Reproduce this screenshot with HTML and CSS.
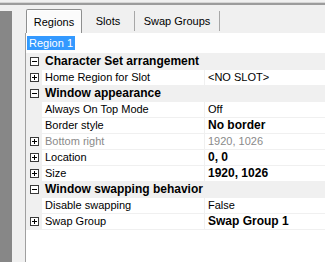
FILE: index.html
```html
<!DOCTYPE html>
<html>
<head>
<meta charset="utf-8">
<link rel="stylesheet" href="styles.css">
</head>
<body>
<div class="topline"></div>
<div class="main">
  <div class="strip"></div>
  <div class="panel">
    <div class="tabs">
      <div class="tab active">Regions</div>
      <div class="tab t-slots">Slots</div>
      <div class="tab t-swap">Swap Groups</div>
    </div>
    <div class="body">
      <div class="namebox"><span class="sel">Region 1</span></div>
      <div class="grid">
        <div class="row cat"><span class="exp"><svg width="9" height="9"><rect x="0.5" y="0.5" width="8" height="8" fill="#fff" stroke="#3a3a3a"/><path d="M2 4.5h5" stroke="#000"/></svg></span><span class="label">Character Set arrangement</span></div>
        <div class="row"><span class="exp"><svg width="9" height="9"><rect x="0.5" y="0.5" width="8" height="8" fill="#fff" stroke="#3a3a3a"/><path d="M2 4.5h5M4.5 2v5" stroke="#000"/></svg></span><span class="label">Home Region for Slot</span><span class="value">&lt;NO SLOT&gt;</span></div>
        <div class="row cat"><span class="exp"><svg width="9" height="9"><rect x="0.5" y="0.5" width="8" height="8" fill="#fff" stroke="#3a3a3a"/><path d="M2 4.5h5" stroke="#000"/></svg></span><span class="label">Window appearance</span></div>
        <div class="row"><span class="exp"></span><span class="label">Always On Top Mode</span><span class="value">Off</span></div>
        <div class="row"><span class="exp"></span><span class="label">Border style</span><span class="value b">No border</span></div>
        <div class="row dim"><span class="exp"><svg width="9" height="9"><rect x="0.5" y="0.5" width="8" height="8" fill="#fff" stroke="#3a3a3a"/><path d="M2 4.5h5M4.5 2v5" stroke="#000"/></svg></span><span class="label">Bottom right</span><span class="value">1920, 1026</span></div>
        <div class="row"><span class="exp"><svg width="9" height="9"><rect x="0.5" y="0.5" width="8" height="8" fill="#fff" stroke="#3a3a3a"/><path d="M2 4.5h5M4.5 2v5" stroke="#000"/></svg></span><span class="label">Location</span><span class="value b">0, 0</span></div>
        <div class="row"><span class="exp"><svg width="9" height="9"><rect x="0.5" y="0.5" width="8" height="8" fill="#fff" stroke="#3a3a3a"/><path d="M2 4.5h5M4.5 2v5" stroke="#000"/></svg></span><span class="label">Size</span><span class="value b">1920, 1026</span></div>
        <div class="row cat"><span class="exp"><svg width="9" height="9"><rect x="0.5" y="0.5" width="8" height="8" fill="#fff" stroke="#3a3a3a"/><path d="M2 4.5h5" stroke="#000"/></svg></span><span class="label">Window swapping behavior</span></div>
        <div class="row"><span class="exp"></span><span class="label">Disable swapping</span><span class="value">False</span></div>
        <div class="row"><span class="exp"><svg width="9" height="9"><rect x="0.5" y="0.5" width="8" height="8" fill="#fff" stroke="#3a3a3a"/><path d="M2 4.5h5M4.5 2v5" stroke="#000"/></svg></span><span class="label">Swap Group</span><span class="value b">Swap Group 1</span></div>
      </div>
    </div>
  </div>
</div>
</body>
</html>
```

FILE: styles.css
```css
html, body {
  margin: 0;
  height: 100%;
}
body {
  background: #f0f0f0;
  font-family: "Liberation Sans", Arial, sans-serif;
  font-size: 11px;
  color: #000;
  overflow: hidden;
}
.topline {
  margin-top: 2px;
  height: 1px;
  background: #d6d6d6;
  border-bottom: 2px solid #9c9c9c;
}
.main {
  display: flex;
  height: calc(100% - 5px);
}
.strip {
  width: 12px;
  background: #878787;
  margin-top: 6px;
}
.panel {
  flex: 1;
  display: flex;
  flex-direction: column;
  margin-left: 13px;
}
.tabs {
  display: flex;
  height: 24px;
  margin-top: 4px;
  padding-left: 1px;
}
.tab {
  box-sizing: border-box;
  display: flex;
  align-items: center;
  justify-content: center;
}
.tab.active {
  width: 56px;
  height: 24px;
  border: 1px solid #8e8f8f;
  border-bottom: none;
  border-radius: 2px 2px 0 0;
  background: #fbfbfb;
  box-shadow: inset 1px 1px #fff;
}
.t-slots, .t-swap {
  height: 20px;
  margin-top: 2px;
  border-right: 1px solid #a7a7a7;
}
.t-slots {
  width: 53px;
}
.t-swap {
  width: 85px;
}
.body {
  flex: 1;
  display: flex;
  flex-direction: column;
  background: #fff;
  border-left: 1px solid #a0a0a0;
}
.namebox {
  height: 20px;
  display: flex;
  align-items: center;
  padding-left: 1px;
}
.sel {
  background: #3399ff;
  color: #fff;
  line-height: 14px;
  padding: 0 2px;
}
.grid {
  border-top: 1px solid #f0f0f0;
}
.row {
  display: flex;
  height: 15px;
  border-bottom: 1px solid #f0f0f0;
  white-space: nowrap;
}
.exp {
  width: 12px;
  padding-left: 4px;
  flex: none;
  background: #f0f0f0;
  display: flex;
  align-items: center;
}
.exp svg {
  display: block;
}
.label {
  width: 159px;
  padding-left: 3px;
  flex: none;
  border-right: 1px solid #f0f0f0;
  line-height: 15px;
}
.value {
  padding-left: 3px;
  line-height: 15px;
}
.b {
  font-weight: bold;
  font-size: 12px;
}
.cat {
  background: #f0f0f0;
  font-weight: bold;
  font-size: 12px;
}
.cat .label {
  border-right: none;
  overflow: visible;
}
.dim .label, .dim .value {
  color: #8a8a8a;
}
```
